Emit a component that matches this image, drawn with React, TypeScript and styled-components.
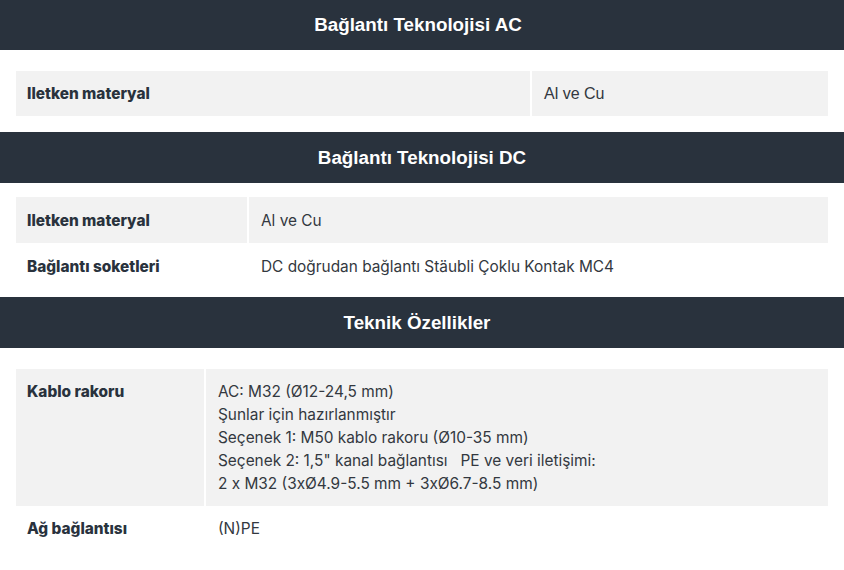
import React from "react";
import styled, { createGlobalStyle } from "styled-components";

const Global = createGlobalStyle`
  html, body { margin: 0; padding: 0; background: #ffffff; }
  body { font-family: Inter, "Noto Sans", sans-serif; }
`;

const Page = styled.div`
  display: flex;
  flex-direction: column;
  width: 844px;
`;

const Header = styled.div<{ $mb: number; $h: number; $shift: number }>`
  background: #29323d;
  color: #ffffff;
  height: ${(p) => p.$h}px;
  display: flex;
  align-items: center;
  justify-content: center;
  font-family: "Liberation Sans", Arial, sans-serif;
  font-weight: 700;
  font-size: 18.8px;
  margin-bottom: ${(p) => p.$mb}px;
  padding-right: ${(p) => p.$shift * 2}px;
`;

const Table = styled.div<{ $cols: string; $mb: number }>`
  display: grid;
  grid-template-columns: ${(p) => p.$cols};
  column-gap: 2px;
  margin: 0 16px ${(p) => p.$mb}px 16px;
`;

const Cell = styled.div<{ $shade: boolean; $value?: boolean; $arial?: boolean; $pl: number; $py: number }>`
  background: ${(p) => (p.$shade ? "#f2f2f2" : "#ffffff")};
  padding: ${(p) => p.$py}px 10px ${(p) => p.$py}px ${(p) => p.$pl}px;
  font-family: ${(p) => (p.$arial ? '"Liberation Sans", Arial, sans-serif' : 'Inter, "Noto Sans", sans-serif')};
  font-size: ${(p) => (p.$arial ? 16 : 15.4)}px;
  line-height: 23px;
  font-weight: ${(p) => (p.$value ? 400 : 800)};
  color: ${(p) => (p.$value ? "#333840" : "#29323d")};
`;

type Row = { label: string; value: string[]; arial?: boolean };

const Section: React.FC<{
  title: string;
  cols: string;
  rows: Row[];
  hmb: number;
  tmb: number;
  h: number;
  shift?: number;
  py?: number;
}> = ({ title, cols, rows, hmb, tmb, h, shift = 0, py = 11 }) => (
  <>
    <Header $mb={hmb} $h={h} $shift={shift}>{title}</Header>
    <Table $cols={cols} $mb={tmb}>
      {rows.map((r, i) => (
        <React.Fragment key={i}>
          <Cell $shade={i % 2 === 0} $pl={11} $py={py}>{r.label}</Cell>
          <Cell $shade={i % 2 === 0} $value $arial={r.arial} $pl={12} $py={py}>
            {r.value.map((v, j) => (
              <div key={j}>{v}</div>
            ))}
          </Cell>
        </React.Fragment>
      ))}
    </Table>
  </>
);

export default function App() {
  return (
    <Page>
      <Global />
      <Section
        title="Bağlantı Teknolojisi AC"
        cols="514px 1fr"
        hmb={21}
        tmb={16}
        h={50}
        shift={4}
        rows={[{ label: "Iletken materyal", value: ["Al ve Cu"], arial: true }]}
      />
      <Section
        title="Bağlantı Teknolojisi DC"
        cols="231px 1fr"
        hmb={14}
        tmb={8}
        h={51}
        py={11.5}
        rows={[
          { label: "Iletken materyal", value: ["Al ve Cu"] },
          { label: "Bağlantı soketleri", value: ["DC doğrudan bağlantı Stäubli Çoklu Kontak MC4"] },
        ]}
      />
      <Section
        title="Teknik Özellikler"
        cols="188px 1fr"
        hmb={21}
        tmb={0}
        h={51}
        shift={5}
        rows={[
          {
            label: "Kablo rakoru",
            value: [
              "AC: M32 (Ø12-24,5 mm)",
              "Şunlar için hazırlanmıştır",
              "Seçenek 1: M50 kablo rakoru (Ø10-35 mm)",
              "Seçenek 2: 1,5\" kanal bağlantısı \u00a0 PE ve veri iletişimi:",
              "2 x M32 (3xØ4.9-5.5 mm + 3xØ6.7-8.5 mm)",
            ],
          },
          { label: "Ağ bağlantısı", value: ["(N)PE"] },
        ]}
      />
    </Page>
  );
}
